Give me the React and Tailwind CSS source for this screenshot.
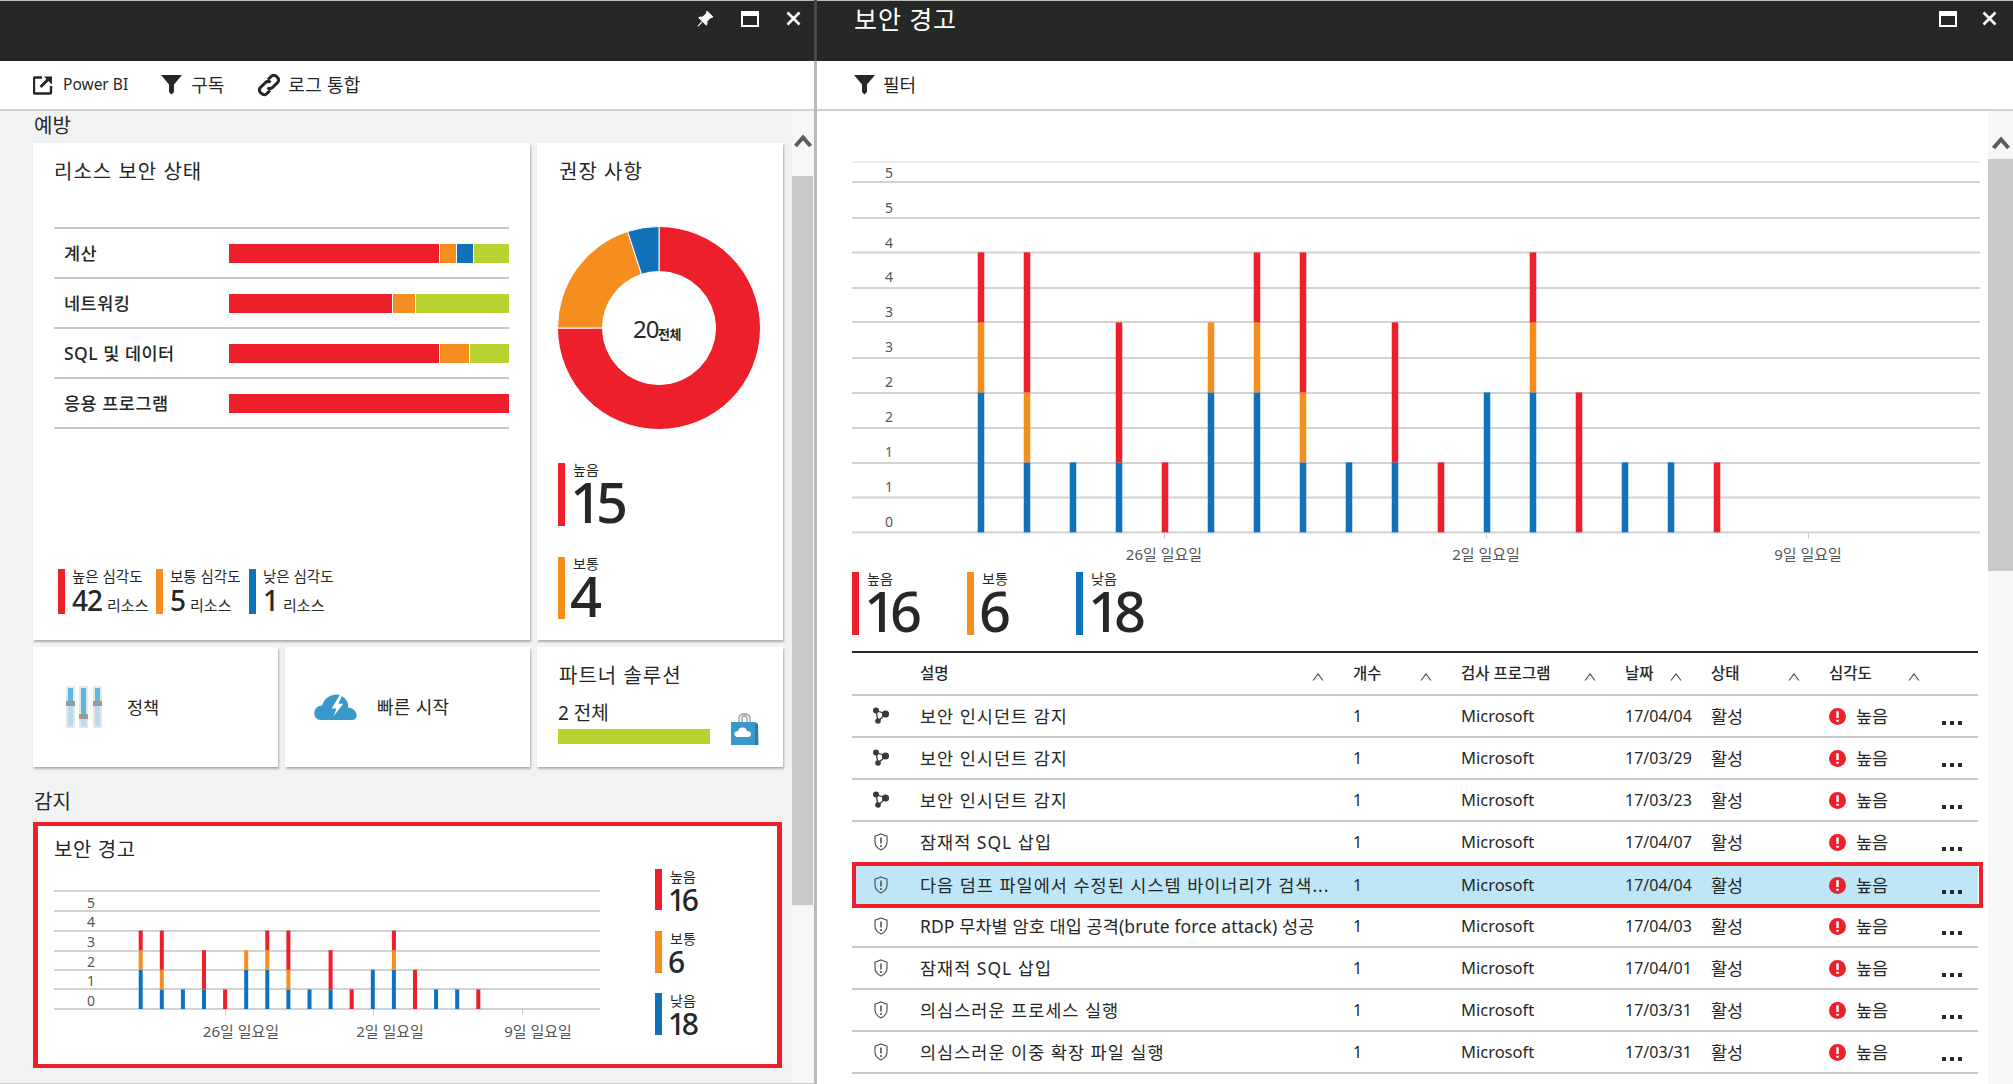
import React from "react";
import { BsPinAngleFill } from "react-icons/bs";

const RED = "#ed1f2b";
const ORANGE = "#f68d1f";
const BLUE = "#0f72ba";
const FONT = "'Noto Sans','Noto Sans CJK KR',sans-serif";

// blue, orange, red per day
const days = [
  [2, 1, 1], [1, 1, 2], [1, 0, 0], [1, 0, 2], [0, 0, 1], [2, 1, 0],
  [2, 1, 1], [1, 1, 2], [1, 0, 0], [1, 0, 2], [0, 0, 1], [2, 0, 0],
  [2, 1, 1], [0, 0, 2], [1, 0, 0], [1, 0, 0], [0, 0, 1],
];

const alerts = [
  { icon: "nodes", name: "보안 인시던트 감지", date: "17/04/04" },
  { icon: "nodes", name: "보안 인시던트 감지", date: "17/03/29" },
  { icon: "nodes", name: "보안 인시던트 감지", date: "17/03/23" },
  { icon: "shield", name: "잠재적 SQL 삽입", date: "17/04/07" },
  { icon: "shield", name: "다음 덤프 파일에서 수정된 시스템 바이너리가 검색...", date: "17/04/04", selected: true },
  { icon: "shield", name: "RDP 무차별 암호 대입 공격(brute force attack) 성공", date: "17/04/03", tight: true },
  { icon: "shield", name: "잠재적 SQL 삽입", date: "17/04/01" },
  { icon: "shield", name: "의심스러운 프로세스 실행", date: "17/03/31" },
  { icon: "shield", name: "의심스러운 이중 확장 파일 실행", date: "17/03/31" },
];

const resourceRows = [
  { name: "계산", parts: [[210, RED], [16, ORANGE], [16, BLUE], [35, "#b8d432"]] },
  { name: "네트워킹", parts: [[163, RED], [22, ORANGE], [93, "#b8d432"]] },
  { name: "SQL 및 데이터", parts: [[210, RED], [29, ORANGE], [39, "#b8d432"]] },
  { name: "응용 프로그램", parts: [[280, RED]] },
];

const MaxIcon = () => (
  <svg width="18" height="16" viewBox="0 0 18 16">
    <rect x="1" y="1" width="16" height="14" fill="none" stroke="#fff" strokeWidth="2" />
    <rect x="1" y="1" width="16" height="4" fill="#fff" />
  </svg>
);

const CloseIcon = () => (
  <svg width="15" height="15" viewBox="0 0 15 15">
    <path d="M1.5 1.5 L13.5 13.5 M13.5 1.5 L1.5 13.5" stroke="#fff" strokeWidth="2.6" />
  </svg>
);

const FunnelIcon = () => (
  <svg width="21" height="20" viewBox="0 0 21 20" fill="#262825">
    <path d="M0 0 H21 L13 9.5 V17 L10.5 19.5 L8 17 V9.5 Z" />
  </svg>
);

const OpenIcon = () => (
  <svg width="20" height="20" viewBox="0 0 20 20" fill="none" stroke="#262825">
    <path d="M9 2.5 H2 Q1 2.5 1 3.5 V17.5 Q1 18.5 2 18.5 H17 Q18 18.5 18 17.5 V11" strokeWidth="2.4" />
    <path d="M7.5 12 L16 3.5" strokeWidth="3" />
    <path d="M11 1.5 H19 V9.5 Z" fill="#262825" stroke="none" />
  </svg>
);

const LinkIcon = () => (
  <svg width="24" height="24" viewBox="0 0 24 24" fill="none" stroke="#262825" strokeWidth="3">
    <path d="M11 6.5 L14.5 3.2 Q17 1 20 3.8 Q23 7 20.5 9.6 L15.5 14.5 Q13 16.6 10.5 14.6" />
    <path d="M13 17.5 L9.5 20.8 Q7 23 4 20.2 Q1 17 3.5 14.4 L8.5 9.5 Q11 7.4 13.5 9.4" />
  </svg>
);

const ScrollUp = () => (
  <svg width="18" height="14" viewBox="0 0 18 14">
    <path d="M1.5 12 L9 3.5 L16.5 12" fill="none" stroke="#5b5b5b" strokeWidth="4" />
  </svg>
);

const NodesIcon = () => (
  <svg width="18" height="18" viewBox="0 0 18 18" fill="#3a3a3a">
    <path d="M4 3.5 L14 7 L6 14 Z" fill="none" stroke="#3a3a3a" strokeWidth="1.3" />
    <circle cx="4" cy="3.5" r="3" />
    <circle cx="13.5" cy="7" r="3.6" />
    <circle cx="6" cy="14" r="2.8" />
  </svg>
);

const ShieldIcon = () => (
  <svg width="14" height="18" viewBox="0 0 14 18" fill="none" stroke="#555">
    <path d="M7 1 L13 3.2 V9 Q13 14 7 17 Q1 14 1 9 V3.2 Z" strokeWidth="1.2" />
    <path d="M7 4.5 V10.5 M7 12 V14" strokeWidth="1.6" />
  </svg>
);

const AlertIcon = () => (
  <svg width="17" height="17" viewBox="0 0 16 16">
    <circle cx="8" cy="8" r="8" fill={RED} />
    <path d="M8 3 V9.5 M8 11 V13" stroke="#fff" strokeWidth="2.4" />
  </svg>
);

const SortIcon = () => (
  <svg width="12" height="8" viewBox="0 0 12 8" className="mt-[11px]">
    <path d="M1 7.5 L6 1 L11 7.5" fill="none" stroke="#444" strokeWidth="1.1" />
  </svg>
);

const PolicyIcon = () => (
  <svg width="36" height="42" viewBox="0 0 36 42">
    <rect x="0" y="0" width="9" height="42" fill="#e6e6e6" />
    <rect x="13" y="0" width="9" height="42" fill="#e6e6e6" />
    <rect x="27" y="0" width="9" height="42" fill="#e6e6e6" />
    <rect x="2" y="2" width="5" height="38" fill="#b5dcf3" />
    <rect x="15" y="2" width="5" height="38" fill="#b5dcf3" />
    <rect x="29" y="2" width="5" height="38" fill="#b5dcf3" />
    <rect x="2" y="2" width="5" height="14" fill="#5cb8e2" />
    <rect x="15" y="2" width="5" height="27" fill="#5cb8e2" />
    <rect x="29" y="2" width="5" height="14" fill="#5cb8e2" />
    <rect x="0" y="15" width="9" height="5" fill="#9a9a9a" />
    <rect x="13" y="28" width="9" height="5" fill="#9a9a9a" />
    <rect x="27" y="15" width="9" height="5" fill="#9a9a9a" />
  </svg>
);

const CloudIcon = () => (
  <svg width="43" height="27" viewBox="0 0 44 28">
    <path d="M6 27 Q0 26 0 20 Q0 13 8 12 Q11 3 19 1 Q27 -1 32 5 Q36 9 35 14 Q43 15 44 22 Q44 27 39 27 Z" fill="#3999c9" />
    <path d="M27 0 L18 15 H23 L20 23 L30 10 H25 L29 1 Z" fill="#fff" />
  </svg>
);

const BagIcon = () => (
  <svg width="29" height="33" viewBox="0 0 29 33">
    <path d="M9 10 V5 Q9 1 14.5 1 Q20 1 20 5 V10 M12 10 V5 Q12 3 14.5 3 Q17 3 17 5 V10" fill="none" stroke="#9a9a9a" strokeWidth="1.3" />
    <path d="M1 9 H25 V32 H1 Z" fill="#3999c9" />
    <path d="M25 9 L28 11 L28.5 32 L25 32 Z" fill="#2b7fae" />
    <path d="M7 24 Q4 23 4.5 20 Q5 18 8 18 Q9 14 13 14.5 Q17 15 17 18 Q21 18 21 21 Q21 24 18 24 Z" fill="#fff" />
  </svg>
);

const arcPath = (from, to) => {
  const cx = 102;
  const cy = 102;
  const R = 101.5;
  const r = 56.5;
  const pt = (rad, pct) => {
    const a = (pct / 100) * 2 * Math.PI;
    return `${(cx + rad * Math.sin(a)).toFixed(2)} ${(cy - rad * Math.cos(a)).toFixed(2)}`;
  };
  const large = to - from > 50 ? 1 : 0;
  return `M${pt(R, from)} A${R} ${R} 0 ${large} 1 ${pt(R, to)} L${pt(r, to)} A${r} ${r} 0 ${large} 0 ${pt(r, from)} Z`;
};

const Donut = () => (
  <svg width="204" height="204" viewBox="0 0 204 204" style={{ fontFamily: FONT }}>
    <g stroke="#fff" strokeWidth="1">
      <path d={arcPath(0, 75)} fill={RED} />
      <path d={arcPath(75, 95)} fill={ORANGE} />
      <path d={arcPath(95, 100)} fill={BLUE} />
    </g>
    <text x="76" y="111.5" fontSize="24" fill="#262825" letterSpacing="-1">20</text>
    <text x="101" y="113" fontSize="13" fontWeight="700" fill="#262825" letterSpacing="-0.5">전체</text>
  </svg>
);

const StackChart = ({ height, zero, unit, step, first, barWidth, lines, labels, ticks, tickLabels, width, labelX, fontSize, labelY, tickSize }) => (
  <svg width={width} height={height} viewBox={`0 0 ${width} ${height}`} style={{ fontFamily: FONT }}>
    {lines.map((y, i) => (
      <rect key={i} x="0" y={y - 1} width={width} height="2" fill={i === 0 && lines.length > 7 ? "#ececec" : "#d2d2d2"} />
    ))}
    {labels.map((l, i) => (
      <text key={i} x={labelX} y={l.y} fontSize={fontSize} fill="#555" textAnchor="middle" dominantBaseline="middle">{l.text}</text>
    ))}
    {days.map((d, i) => {
      const x = first + i * step - barWidth / 2;
      const blue = d[0] * unit;
      const orange = d[1] * unit;
      const red = d[2] * unit;
      return (
        <g key={i}>
          {blue > 0 && <rect x={x} y={zero - blue} width={barWidth} height={blue} fill={BLUE} />}
          {orange > 0 && <rect x={x} y={zero - blue - orange} width={barWidth} height={orange} fill={ORANGE} />}
          {red > 0 && <rect x={x} y={zero - blue - orange - red} width={barWidth} height={red} fill={RED} />}
        </g>
      );
    })}
    {ticks.map((x) => (
      <rect key={x} x={x} y={zero} width="1" height="6" fill="#ccc" />
    ))}
    {tickLabels.map((t) => (
      <text key={t.text} x={t.x} y={labelY} fontSize={tickSize} fill="#555" textAnchor="middle" dominantBaseline="middle">{t.text}</text>
    ))}
  </svg>
);

const Stat = ({ color, label, value, barClass, numClass, labelClass = "text-[14px] leading-[14px]" }) => (
  <div className="flex">
    <div className={barClass} style={{ backgroundColor: color }}></div>
    <div className="ml-[8px] flex flex-col text-[#262825]">
      <span className={labelClass}>{label}</span>
      <span className={numClass}>{value}</span>
    </div>
  </div>
);

const LegendItem = ({ color, label, value, width }) => (
  <div className={`flex ${width}`}>
    <div className="h-[45px] w-[7px]" style={{ backgroundColor: color }}></div>
    <div className="ml-[7px] flex flex-col whitespace-nowrap text-[#262825]">
      <span className="mt-[-1px] text-[14.5px] leading-[16px]">{label}</span>
      <span className="mt-[1px] flex items-baseline leading-[30px]">
        <span className="text-[28px] font-medium tracking-[-1px]">{value}</span>
        <span className="ml-[5px] text-[15px]">리소스</span>
      </span>
    </div>
  </div>
);

const Card = ({ className = "", children }) => (
  <div className={`bg-white shadow-[1px_2px_2px_rgba(0,0,0,0.28)] ${className}`}>{children}</div>
);

const HeadCell = ({ title, pad = "pr-[29px]" }) => (
  <div className={`flex items-start justify-between pt-[9px] ${pad}`}>
    <span className="text-[15.5px] font-medium">{title}</span>
    <SortIcon />
  </div>
);

const BIG_NUM = "mt-[-4px] ml-[-3px] h-[49px] text-[56px] leading-[56px] font-medium tracking-[-6px]";
const MID_NUM = "mt-[1px] ml-[-2px] h-[26px] text-[30px] leading-[30px] font-medium tracking-[-3.5px]";
const CARD_TITLE = "mt-[15px] text-[20px] leading-[28px] tracking-[1px]";

const App = () => {
  const bigLines = [12, 32, 68, 102.5, 138, 172, 208, 243, 278, 313, 347.5, 382.4];
  const bigLabels = ["5", "5", "4", "4", "3", "3", "2", "2", "1", "1", "0"].map((text, i) => ({
    text,
    y: 24 + i * 34.9,
  }));
  const miniLabels = ["5", "4", "3", "2", "1", "0"].map((text, i) => ({ text, y: 21 + i * 19.6 }));

  return (
    <div className="flex h-[1084px] w-[2013px] overflow-hidden bg-white font-['Noto_Sans','Noto_Sans_CJK_KR',sans-serif] text-[#262825]">
      {/* left blade */}
      <div className="flex w-[814px] shrink-0 flex-col border-b border-[#ccc]">
        <div className="flex h-[61px] shrink-0 justify-end gap-[27px] border-t border-[#bbb] bg-[#262825] pt-[10px] pr-[13px] text-white">
          <BsPinAngleFill size={18} className="mt-[-1px]" />
          <MaxIcon />
          <CloseIcon />
        </div>
        <div className="flex h-[50px] shrink-0 items-center border-b-2 border-[#d0d0d0] pl-[33px] text-[18px]">
          <OpenIcon />
          <span className="ml-[10px] text-[15.5px]">Power BI</span>
          <span className="ml-[33px]"><FunnelIcon /></span>
          <span className="ml-[9px]">구독</span>
          <span className="ml-[33px]"><LinkIcon /></span>
          <span className="ml-[7px] tracking-[0.3px]">로그 통합</span>
        </div>
        <div className="flex min-h-0 flex-1 bg-[#f1f2f4]">
          <div className="w-[792px] shrink-0 pl-[33px]">
            <div className="ml-[1px] h-[32px] text-[20px] leading-[30px]">예방</div>
            <div className="flex gap-[7px]">
              <Card className="flex h-[497px] w-[497px] flex-col px-[21px]">
                <div className={CARD_TITLE}>리소스 보안 상태</div>
                <div className="mt-[41px] border-t-2 border-[#c8c8c8]">
                  {resourceRows.map((row) => (
                    <div key={row.name} className="flex h-[50px] items-center border-b-2 border-[#c8c8c8]">
                      <div className="w-[175px] pl-[10px] text-[17.5px] font-medium tracking-[0.5px]">{row.name}</div>
                      <div className="flex h-[19px] w-[280px] gap-px">
                        {row.parts.map(([w, color], i) => (
                          <div key={i} style={{ width: w, backgroundColor: color }}></div>
                        ))}
                      </div>
                    </div>
                  ))}
                </div>
                <div className="mt-auto mb-[20px] flex pl-[4px]">
                  <LegendItem color={RED} label="높은 심각도" value="42" width="w-[98px]" />
                  <LegendItem color={ORANGE} label="보통 심각도" value="5" width="w-[93px]" />
                  <LegendItem color={BLUE} label="낮은 심각도" value="1" width="w-[110px]" />
                </div>
              </Card>
              <Card className="h-[497px] w-[246px] pl-[21px]">
                <div className={`${CARD_TITLE} ml-[1px]`}>권장 사항</div>
                <div className="mt-[40px] ml-[-1px]">
                  <Donut />
                </div>
                <div className="mt-[33px]">
                  <Stat color={RED} label="높음" value="15" barClass="h-[63px] w-[7px]" numClass={BIG_NUM} />
                </div>
                <div className="mt-[31px]">
                  <Stat color={ORANGE} label="보통" value="4" barClass="h-[62px] w-[7px]" numClass={BIG_NUM} />
                </div>
              </Card>
            </div>
            <div className="mt-[7px] flex gap-[7px]">
              <Card className="flex h-[120px] w-[245px] items-center pl-[33px]">
                <PolicyIcon />
                <span className="ml-[25px] text-[17.5px]">정책</span>
              </Card>
              <Card className="flex h-[120px] w-[245px] items-center pl-[29px]">
                <CloudIcon />
                <span className="ml-[20px] text-[18px] tracking-[0.3px]">빠른 시작</span>
              </Card>
              <Card className="relative h-[120px] w-[246px] pl-[21px]">
                <div className={`${CARD_TITLE} ml-[1px]`}>파트너 솔루션</div>
                <div className="mt-[10px] text-[19px] leading-[26px]">2 전체</div>
                <div className="mt-[3px] h-[15px] w-[152px] bg-[#b8d432]"></div>
                <div className="absolute top-[66px] right-[24px]">
                  <BagIcon />
                </div>
              </Card>
            </div>
            <div className="ml-[1px] flex h-[55px] items-end pb-[6px] text-[20px] leading-[28px]">감지</div>
            <div className="h-[246px] w-[749px] border-[5px] border-y-4 border-[#ed1f2b] bg-white pl-[16px]">
              <div className="mt-[10px] text-[20px] leading-[28px] tracking-[0.6px]">보안 경고</div>
              <div className="flex">
                <div className="mt-[19px]">
                  <StackChart
                    width={546}
                    height={160}
                    zero={126}
                    unit={19.6}
                    step={21.1}
                    first={86.7}
                    barWidth={4}
                    lines={[8, 28, 48, 68, 87, 106, 126]}
                    labels={miniLabels}
                    labelX={37}
                    fontSize={14}
                    tickSize={15}
                    ticks={[171, 319, 468]}
                    tickLabels={[
                      { text: "26일 일요일", x: 187 },
                      { text: "2일 일요일", x: 336 },
                      { text: "9일 일요일", x: 484 },
                    ]}
                    labelY={150}
                  />
                </div>
                <div className="ml-[55px] flex flex-col gap-[20px] pt-[5px]">
                  <Stat color={RED} label="높음" value="16" barClass="h-[41px] w-[7px]" numClass={MID_NUM} labelClass="text-[14px] leading-[15px]" />
                  <Stat color={ORANGE} label="보통" value="6" barClass="h-[42px] w-[7px]" numClass={MID_NUM} labelClass="text-[14px] leading-[15px]" />
                  <Stat color={BLUE} label="낮음" value="18" barClass="h-[42px] w-[7px]" numClass={MID_NUM} labelClass="text-[14px] leading-[15px]" />
                </div>
              </div>
            </div>
          </div>
          <div className="flex w-[22px] flex-col bg-[#f6f7f8]">
            <div className="flex h-[65px] shrink-0 justify-center pt-[23px]">
              <ScrollUp />
            </div>
            <div className="h-[729px] w-[21px] bg-[#c9c9c9]"></div>
          </div>
        </div>
      </div>
      <div className="flex w-[3px] shrink-0 flex-col bg-[#b9b9b9]">
        <div className="h-[61px] bg-[#4a4a4a]"></div>
      </div>

      {/* right blade */}
      <div className="flex min-w-0 flex-1 flex-col">
        <div className="flex h-[61px] shrink-0 justify-between border-t border-[#bbb] bg-[#262825] pr-[16px] pl-[37px] text-white">
          <div className="mt-[2px] text-[25px] leading-[32px] tracking-[0.9px]">보안 경고</div>
          <div className="flex gap-[25px] pt-[10px]">
            <MaxIcon />
            <CloseIcon />
          </div>
        </div>
        <div className="flex h-[50px] shrink-0 items-center border-b-2 border-[#d0d0d0] pl-[37px] text-[18px]">
          <FunnelIcon />
          <span className="ml-[8px]">필터</span>
        </div>
        <div className="flex min-h-0 flex-1">
          <div className="w-[1171px] shrink-0 pl-[35px]">
            <div className="mt-[39px] h-[421px]">
              <StackChart
                width={1128}
                height={421}
                zero={382.4}
                unit={70}
                step={46}
                first={129}
                barWidth={6.5}
                lines={bigLines}
                labels={bigLabels}
                labelX={37}
                fontSize={14}
                tickSize={15}
                ticks={[312, 634, 956]}
                tickLabels={[
                  { text: "26일 일요일", x: 312 },
                  { text: "2일 일요일", x: 634 },
                  { text: "9일 일요일", x: 956 },
                ]}
                labelY={405.5}
              />
            </div>
            <div className="mt-[1px] flex h-[63px]">
              <div className="w-[115px]">
                <Stat color={RED} label="높음" value="16" barClass="h-[63px] w-[7px]" numClass={BIG_NUM} />
              </div>
              <div className="w-[109px]">
                <Stat color={ORANGE} label="보통" value="6" barClass="h-[63px] w-[7px]" numClass={BIG_NUM} />
              </div>
              <Stat color={BLUE} label="낮음" value="18" barClass="h-[63px] w-[7px]" numClass={BIG_NUM} />
            </div>
            <div className="mt-[16px] w-[1126px] border-t-2 border-[#262825]">
              <div className="grid h-[43px] grid-cols-[68px_433px_108px_164px_86px_118px_111px_38px] border-b-2 border-[#c8c8c8]">
                <div></div>
                <HeadCell title="설명" />
                <HeadCell title="개수" />
                <HeadCell title="검사 프로그램" />
                <HeadCell title="날짜" />
                <HeadCell title="상태" />
                <HeadCell title="심각도" pad="pr-[20px]" />
                <div></div>
              </div>
              {alerts.map((a, i) => (
                <div
                  key={i}
                  className={`relative grid h-[42px] grid-cols-[68px_433px_108px_164px_86px_118px_111px_38px] items-center text-[17.5px] ${a.selected ? "bg-[#bfe6f7]" : "border-b-2 border-[#c8c8c8]"}`}
                >
                  <div className="flex justify-center pr-[10px]">
                    {a.icon === "nodes" ? <NodesIcon /> : <ShieldIcon />}
                  </div>
                  <div className={`truncate ${a.tight ? "tracking-[0.1px]" : "tracking-[1px]"}`}>{a.name}</div>
                  <div className="text-[16px]">1</div>
                  <div className="text-[16.5px]">Microsoft</div>
                  <div className="text-[16px]">{a.date}</div>
                  <div>활성</div>
                  <div className="flex items-center">
                    <AlertIcon />
                    <span className="ml-[10px]">높음</span>
                  </div>
                  <div className="flex justify-start gap-[4px] pt-[14px] pl-[2px]">
                    <span className="h-[4px] w-[4px] bg-[#262825]"></span>
                    <span className="h-[4px] w-[4px] bg-[#262825]"></span>
                    <span className="h-[4px] w-[4px] bg-[#262825]"></span>
                  </div>
                  {a.selected && (
                    <div className="absolute -top-[2px] -right-[5px] -bottom-[2px] left-0 border-4 border-[#ed1f2b]"></div>
                  )}
                </div>
              ))}
            </div>
          </div>
          <div className="flex w-[25px] flex-col bg-[#f6f7f8]">
            <div className="flex h-[48px] shrink-0 justify-center pt-[25px]">
              <ScrollUp />
            </div>
            <div className="h-[412px] bg-[#c9c9c9]"></div>
          </div>
        </div>
      </div>
    </div>
  );
};

export default App;
